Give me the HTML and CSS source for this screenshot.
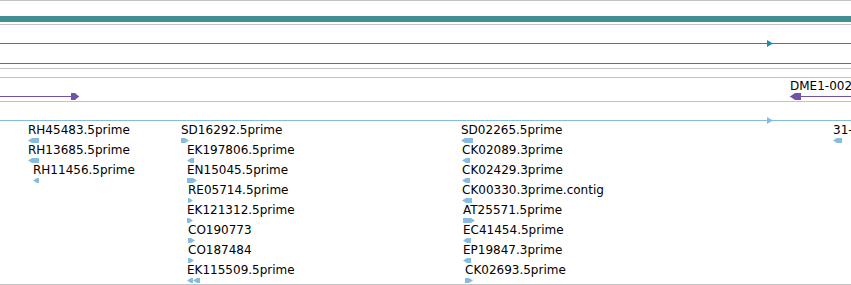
FILE: index.html
```html
<!DOCTYPE html>
<html lang="en">
<head>
  <meta charset="UTF-8">
  <title>Genome Browser Tracks</title>
  <link rel="stylesheet" href="styles.css">
</head>
<body>
  <div class="browser">
    <div class="rule"></div>

    <div class="track overview">
      <div class="ref-bar"></div>
    </div>
    <div class="rule"></div>

    <div class="track genes">
      <div class="strand teal" style="top: 18px"><span class="tick plus" style="left: 767px"></span></div>
      <div class="strand teal" style="top: 38px"></div>
    </div>
    <div class="rule"></div>

    <div class="track spacer"></div>
    <div class="rule"></div>

    <div class="track transcripts">
      <div class="transcript" style="top: 18px; left: 0; width: 79px">
        <span class="head plus"></span>
      </div>
      <div class="label" style="top: 1px; left: 790px">DME1-002</div>
      <div class="transcript" style="top: 18px; left: 790px; width: 61px">
        <span class="head minus"></span>
      </div>
    </div>
    <div class="rule"></div>

    <div class="track ests">
      <div class="strand pale" style="top: 18px"><span class="tick plus pale" style="left: 767px"></span></div>

      <!-- column 1 -->
      <div class="feature" style="top: 21px; left: 28px"><span class="label">RH45483.5prime</span><span class="glyph minus" style="width: 11px"></span></div>
      <div class="feature" style="top: 41px; left: 28px"><span class="label">RH13685.5prime</span><span class="glyph minus" style="width: 11px"></span></div>
      <div class="feature" style="top: 61px; left: 33px"><span class="label">RH11456.5prime</span><span class="glyph minus" style="width: 6px"></span></div>

      <!-- column 2 -->
      <div class="feature" style="top: 21px; left: 181px"><span class="label">SD16292.5prime</span><span class="glyph plus" style="width: 8px"></span></div>
      <div class="feature" style="top: 41px; left: 187px"><span class="label">EK197806.5prime</span><span class="glyph minus" style="width: 7px"></span></div>
      <div class="feature" style="top: 61px; left: 187px"><span class="label">EN15045.5prime</span><span class="glyph plus" style="width: 10px"></span></div>
      <div class="feature" style="top: 81px; left: 188px"><span class="label">RE05714.5prime</span><span class="glyph plus" style="width: 5px"></span></div>
      <div class="feature" style="top: 101px; left: 187px"><span class="label">EK121312.5prime</span><span class="glyph plus" style="width: 6px"></span></div>
      <div class="feature" style="top: 121px; left: 188px"><span class="label">CO190773</span><span class="glyph plus" style="width: 7px"></span></div>
      <div class="feature" style="top: 141px; left: 188px"><span class="label">CO187484</span><span class="glyph plus" style="width: 6px"></span></div>
      <div class="feature" style="top: 161px; left: 187px"><span class="label">EK115509.5prime</span><span class="glyph-pair"><span class="glyph minus" style="width: 6px"></span><span class="glyph minus" style="width: 7px"></span></span></div>

      <!-- column 3 -->
      <div class="feature" style="top: 21px; left: 461px"><span class="label">SD02265.5prime</span><span class="glyph minus" style="width: 12px"></span></div>
      <div class="feature" style="top: 41px; left: 462px"><span class="label">CK02089.3prime</span><span class="glyph minus" style="width: 8px"></span></div>
      <div class="feature" style="top: 61px; left: 462px"><span class="label">CK02429.3prime</span><span class="glyph minus" style="width: 8px"></span></div>
      <div class="feature" style="top: 81px; left: 462px"><span class="label">CK00330.3prime.contig</span><span class="glyph minus" style="width: 10px"></span></div>
      <div class="feature" style="top: 101px; left: 463px"><span class="label">AT25571.5prime</span><span class="glyph plus" style="width: 12px"></span></div>
      <div class="feature" style="top: 121px; left: 463px"><span class="label">EC41454.5prime</span><span class="glyph minus" style="width: 8px"></span></div>
      <div class="feature" style="top: 141px; left: 463px"><span class="label">EP19847.3prime</span><span class="glyph minus" style="width: 8px"></span></div>
      <div class="feature" style="top: 161px; left: 465px"><span class="label">CK02693.5prime</span><span class="glyph plus" style="width: 8px"></span></div>

      <!-- column 4, runs off the edge -->
      <div class="feature" style="top: 21px; left: 833px"><span class="label">31-1.5prime</span><span class="glyph minus" style="width: 9px"></span></div>
    </div>
    <div class="rule"></div>
  </div>
</body>
</html>
```

FILE: styles.css
```css
body {
  margin: 0;
  background-color: #fff;
  font-family: "DejaVu Sans", sans-serif;
  font-size: 12px;
  color: #000;
}
.browser {
  width: 851px;
  height: 285px;
  overflow: hidden;
}
.rule {
  height: 1px;
  background-color: #c2c2c2;
}
.track {
  position: relative;
}
.overview {
  height: 23px;
  padding-top: 15px;
  box-sizing: border-box;
}
.ref-bar {
  height: 6px;
  background-color: #418f90;
}
.genes {
  height: 43px;
}
.spacer {
  height: 8px;
}
.transcripts {
  height: 23px;
}
.ests {
  height: 182px;
}

/* strand lines */
.strand {
  position: absolute;
  left: 0;
  right: 0;
  height: 1px;
}
.strand.teal {
  background-color: #1b8daa;
}
.strand.pale {
  background-color: #87bce0;
}
.tick {
  position: absolute;
  top: -3px;
  width: 6px;
  height: 7px;
  background-color: #1b8daa;
  clip-path: polygon(0 0, 100% 50%, 0 100%);
}
.tick.pale {
  background-color: #87bce0;
}

/* transcripts */
.transcript {
  position: absolute;
  height: 1px;
  background-color: #6f53a9;
}
.head {
  position: absolute;
  top: -3px;
  width: 8px;
  height: 7px;
  background-color: #6f53a9;
}
.head.plus {
  right: 0;
  clip-path: polygon(0 0, 4px 0, 100% 50%, 4px 100%, 0 100%);
}
.head.minus {
  left: 0;
  width: 11px;
  clip-path: polygon(0 50%, 5px 0, 100% 0, 100% 100%, 5px 100%);
}

/* labels + EST glyphs */
.label {
  position: absolute;
  display: block;
  line-height: 14px;
  white-space: nowrap;
}
.feature {
  position: absolute;
  display: flex;
  flex-direction: column;
  align-items: flex-start;
}
.feature .label {
  position: static;
}
.glyph {
  display: block;
  height: 5px;
  margin-top: 1px;
  background-color: #87bce0;
}
.glyph.minus {
  clip-path: polygon(0 50%, 4px 0, 100% 0, 100% 100%, 4px 100%);
}
.glyph.plus {
  clip-path: polygon(0 0, calc(100% - 4px) 0, 100% 50%, calc(100% - 4px) 100%, 0 100%);
}
.glyph-pair {
  display: flex;
}
```
